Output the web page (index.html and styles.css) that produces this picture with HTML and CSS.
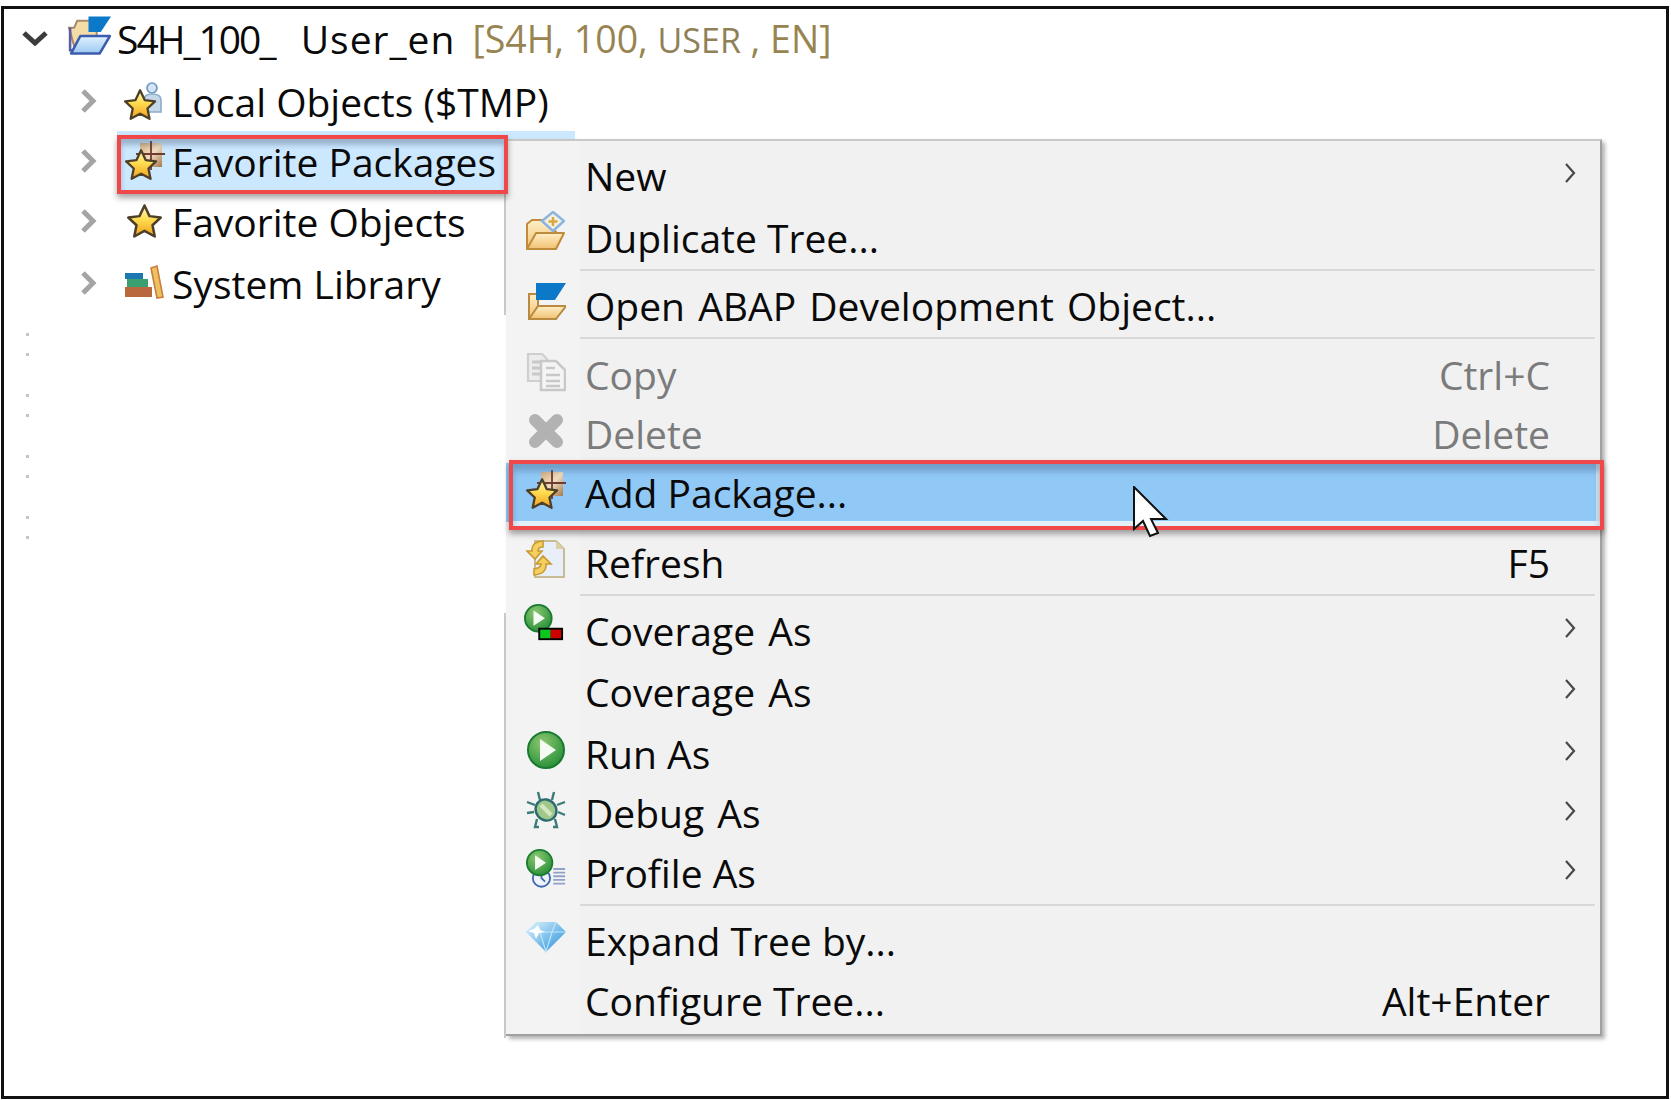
FILE: index.html
```html
<!DOCTYPE html>
<html lang="en">
<head>
    <meta charset="UTF-8">
    <title>Project Explorer - context menu</title>
    <link rel="stylesheet" href="styles.css">
</head>
<body>
    <svg class="defs" width="0" height="0">
        <defs>
            <linearGradient id="gold" x1="0" y1="0" x2="0" y2="1">
                <stop offset="0" stop-color="#fff6c0"/>
                <stop offset="0.45" stop-color="#ffdc50"/>
                <stop offset="1" stop-color="#f0a020"/>
            </linearGradient>
            <linearGradient id="tan" x1="0" y1="0" x2="1" y2="1">
                <stop offset="0" stop-color="#d8b080"/>
                <stop offset="0.5" stop-color="#f0dcc0"/>
                <stop offset="1" stop-color="#a87848"/>
            </linearGradient>
            <linearGradient id="folder" x1="0" y1="0" x2="0" y2="1">
                <stop offset="0" stop-color="#fff0c8"/>
                <stop offset="1" stop-color="#f0c070"/>
            </linearGradient>
            <linearGradient id="glass" x1="0" y1="0" x2="0" y2="1">
                <stop offset="0" stop-color="#e2f2ff"/>
                <stop offset="1" stop-color="#9cc8f0"/>
            </linearGradient>
            <radialGradient id="green" cx="0.4" cy="0.3" r="0.8">
                <stop offset="0" stop-color="#8cc870"/>
                <stop offset="1" stop-color="#1e8a34"/>
            </radialGradient>
            <linearGradient id="gem" x1="0" y1="0" x2="1" y2="1">
                <stop offset="0" stop-color="#e4f6ff"/>
                <stop offset="1" stop-color="#1c8cd8"/>
            </linearGradient>
            <path id="star" d="M14 2 L18 10.500 L27 11.600 L20.400 17.800 L22.200 26.800 L14 22.300 L5.800 26.800 L7.600 17.800 L1 11.600 L10 10.500 Z" fill="url(#gold)" stroke="#4e4028" stroke-width="2" stroke-linejoin="round"/>
            <g id="pkgstar">
                <rect x="15" y="2" width="22" height="24" fill="url(#tan)"/>
                <path d="M26 -2V29M11 13H40" stroke="#6e3c30" stroke-width="1.800" fill="none"/>
                <use href="#star" transform="translate(0 7) scale(1.150)"/>
            </g>
            <g id="playdisc">
                <circle cx="15" cy="15" r="14" fill="url(#green)" stroke="#1a7a30" stroke-width="2"/>
                <path d="M10 7 L22 15 L10 23 Z" fill="#f4fbf2"/>
            </g>
        </defs>
    </svg>

    <div class="frame">
        <ul class="tree">
            <li class="node root">
                <svg class="twisty-open" viewBox="0 0 28 16"><path d="M3 3 L14 13 L25 3" fill="none" stroke="#3c3c3c" stroke-width="5"/></svg>
                <svg class="icon-root" viewBox="0 0 44 38">
                    <path d="M3 12 H8 L11 5 H24 L26 12 H30 V30 H8 Z" fill="#f4dca8" stroke="#a58a70" stroke-width="2"/>
                    <path d="M4 12 V34 H10" fill="none" stroke="#5a5ca0" stroke-width="2.500"/>
                    <path d="M22 1 H44 L34 16 H22 Z" fill="#0c78c8"/>
                    <path d="M14 20 H43 L33 37 H5 Z" fill="url(#glass)" stroke="#3c5cae" stroke-width="2.500" stroke-linejoin="round"/>
                </svg>
                <span class="name"><span class="host">S4H_100_</span> <span class="user">User_en</span></span>
                <span class="decor">[S4H, 100, <span class="decor-small">USER</span> , EN]</span>
            </li>
            <li class="node">
                <svg class="twisty" viewBox="0 0 18 26"><path d="M3 3 L13 13 L3 23" fill="none" stroke="#a4a4a4" stroke-width="5"/></svg>
                <svg class="icon" viewBox="0 0 40 40">
                    <circle cx="28" cy="7" r="5" fill="#d4e4f4" stroke="#6a92c0" stroke-width="1.600"/>
                    <path d="M20 28 V19 Q20 13 28 13 Q37 13 37 19 V31 H22 Z" fill="#c4d8ea" stroke="#8cacc8" stroke-width="1.600"/>
                    <use href="#star" transform="translate(0 7) scale(1.150)"/>
                </svg>
                <span class="name">Local Objects ($TMP)</span>
            </li>
            <li class="node selected">
                <svg class="twisty" viewBox="0 0 18 26"><path d="M3 3 L13 13 L3 23" fill="none" stroke="#a4a4a4" stroke-width="5"/></svg>
                <svg class="icon" viewBox="0 0 40 40"><use href="#pkgstar"/></svg>
                <span class="name">Favorite Packages</span>
            </li>
            <li class="node">
                <svg class="twisty" viewBox="0 0 18 26"><path d="M3 3 L13 13 L3 23" fill="none" stroke="#a4a4a4" stroke-width="5"/></svg>
                <svg class="icon" viewBox="0 0 40 40"><use href="#star" transform="translate(3 2) scale(1.250)"/></svg>
                <span class="name">Favorite Objects</span>
            </li>
            <li class="node node-last">
                <svg class="twisty" viewBox="0 0 18 26"><path d="M3 3 L13 13 L3 23" fill="none" stroke="#a4a4a4" stroke-width="5"/></svg>
                <svg class="icon" viewBox="0 0 40 40">
                    <path d="M27 4 L33 2 L39 33 L33 34 Z" fill="#eec060" stroke="#c8803c" stroke-width="1.600"/>
                    <rect x="1" y="9" width="18" height="6" fill="#1c78b0"/>
                    <rect x="3" y="15" width="21" height="8" fill="#3aa070"/>
                    <rect x="1" y="23" width="27" height="10" fill="#b8683c"/>
                </svg>
                <span class="name">System Library</span>
            </li>
        </ul>

        <div class="guides">
            <i></i><i></i><i></i><i></i><i></i><i></i><i></i><i></i>
        </div>
    </div>

    <div class="menu">
        <div class="item">
            <span class="slot"></span><span class="label">New</span><span class="key"></span>
            <svg class="more" viewBox="0 0 12 22"><path d="M2 2 L10 11 L2 20" fill="none" stroke="#484848" stroke-width="2.200"/></svg>
        </div>
        <div class="item loose-2">
            <span class="slot"><svg class="icon icon-lifted" viewBox="0 0 40 40">
                <path d="M2 38 V13 L7 9 H18 L32 22 V24 H12 L5 38 Z" fill="url(#folder)" stroke="#c08c3c" stroke-width="2"/>
                <path d="M11 22 H39 L31 38 H2 Z" fill="url(#folder)" stroke="#c08c3c" stroke-width="2" stroke-linejoin="round"/>
                <path d="M28 1 L39 10 L28 20 L17 10 Z" fill="#f4f0e0" stroke="#8cb4e0" stroke-width="2.500"/>
                <path d="M28 6 V15 M23.500 10.500 H32.500" stroke="#d8a840" stroke-width="2.500"/>
            </svg></span>
            <span class="label">Duplicate Tree...</span><span class="key"></span>
        </div>
        <div class="sep"></div>
        <div class="item">
            <span class="slot"><svg class="icon" viewBox="0 0 40 40">
                <path d="M3 37 V12 H12 V24 H34 V27 L30 37 Z" fill="url(#folder)" stroke="#b98a40" stroke-width="2"/>
                <path d="M10 1 H40 L29 18 H10 Z" fill="#0c78c8"/>
                <path d="M12 24 H40 L30 37 H3 Z" fill="url(#folder)" stroke="#b98a40" stroke-width="2" stroke-linejoin="round"/>
            </svg></span>
            <span class="label wide">Open ABAP Development Object...</span><span class="key"></span>
        </div>
        <div class="sep"></div>
        <div class="item compact off loose-2">
            <span class="slot"><svg class="icon" viewBox="0 0 40 40">
                <path d="M2 2 H16 L21 7 V29 H2 Z" fill="#ececec" stroke="#cfcfcf" stroke-width="2.200"/>
                <path d="M6 10 H16 M6 16 H14 M6 22 H14" stroke="#c8c8c8" stroke-width="3"/>
                <path d="M15 9 H30 L39 18 V38 H15 Z" fill="#f4f4f4" stroke="#c8c8c8" stroke-width="2.500"/>
                <path d="M20 16 H29 M20 23 H34 M20 29 H34 M20 34 H34" stroke="#c8c8c8" stroke-width="2.400"/>
            </svg></span>
            <span class="label">Copy</span><span class="key">Ctrl+C</span>
        </div>
        <div class="item compact off">
            <span class="slot"><svg class="icon" viewBox="0 0 40 40">
                <path d="M9 9 L31 31 M31 9 L9 31" fill="none" stroke="#b2b2b2" stroke-width="12" stroke-linecap="round"/>
            </svg></span>
            <span class="label">Delete</span><span class="key">Delete</span>
        </div>
        <div class="item compact hot">
            <span class="slot"><svg class="icon" viewBox="0 0 40 40"><use href="#pkgstar"/></svg></span>
            <span class="label">Add Package...</span><span class="key"></span>
        </div>
        <div class="item gap-above">
            <span class="slot"><svg class="icon" viewBox="0 0 40 40">
                <path d="M9 2 H30 L38 10 V38 H9 Z" fill="#e8eff8" stroke="#c8bc96" stroke-width="2"/>
                <path d="M30 2 V10 H38 Z" fill="#dccfa4"/>
                <path d="M17 2 Q5 3 6 12 L1 12 L9 20 L16 12 L12 12 Q12 8 17 8 Z M8 36 Q21 35 20 25 L25 25 L17 17 L10 25 L15 25 Q15 29 8 30 Z" fill="#f4d060" stroke="#c89a30" stroke-width="1.600"/>
            </svg></span>
            <span class="label">Refresh</span><span class="key">F5</span>
        </div>
        <div class="sep"></div>
        <div class="item">
            <span class="slot"><svg class="icon icon-raised" viewBox="0 0 42 40">
                <use href="#playdisc"/>
                <rect x="15" y="25" width="26" height="13" fill="#000"/>
                <rect x="17" y="27" width="11" height="9" fill="#0ac81e"/>
                <rect x="28" y="27" width="11" height="9" fill="#d00000"/>
            </svg></span>
            <span class="label wide">Coverage As</span><span class="key"></span>
            <svg class="more" viewBox="0 0 12 22"><path d="M2 2 L10 11 L2 20" fill="none" stroke="#484848" stroke-width="2.200"/></svg>
        </div>
        <div class="item loose">
            <span class="slot"></span><span class="label wide">Coverage As</span><span class="key"></span>
            <svg class="more" viewBox="0 0 12 22"><path d="M2 2 L10 11 L2 20" fill="none" stroke="#484848" stroke-width="2.200"/></svg>
        </div>
        <div class="item loose-2">
            <span class="slot"><svg class="icon" viewBox="0 0 40 40">
                <circle cx="20" cy="20" r="18" fill="url(#green)" stroke="#1a7a30" stroke-width="2"/>
                <path d="M14 9 L30 20 L14 31 Z" fill="#f4fbf2"/>
            </svg></span>
            <span class="label">Run As</span><span class="key"></span>
            <svg class="more" viewBox="0 0 12 22"><path d="M2 2 L10 11 L2 20" fill="none" stroke="#484848" stroke-width="2.200"/></svg>
        </div>
        <div class="item compact">
            <span class="slot"><svg class="icon" viewBox="0 0 40 40">
                <path d="M14 10 L12 2 M26 10 L28 2 M9 15 L1 12 M31 15 L39 12 M8 22 L1 23 M32 22 L39 25 M11 29 L9 37 H13 M29 29 L31 37 H27" fill="none" stroke="#3c7c78" stroke-width="2.400"/>
                <ellipse cx="20" cy="20" rx="10" ry="11" transform="rotate(-40 20 20)" fill="#a0c88c" stroke="#2c6c70" stroke-width="2.400"/>
                <path d="M15 15 L25 25" stroke="#d4e8c0" stroke-width="4"/>
            </svg></span>
            <span class="label wide">Debug As</span><span class="key"></span>
            <svg class="more" viewBox="0 0 12 22"><path d="M2 2 L10 11 L2 20" fill="none" stroke="#484848" stroke-width="2.200"/></svg>
        </div>
        <div class="item">
            <span class="slot"><svg class="icon" viewBox="0 0 44 44">
                <circle cx="17" cy="32" r="9.500" fill="#f0f4fa" stroke="#3c68b4" stroke-width="2"/>
                <path d="M17 26 V32 L21 36" fill="none" stroke="#3c68b4" stroke-width="2"/>
                <path d="M30 22 H43 M30 26 H43 M30 30 H43 M30 34 H43 M30 38 H43" stroke="#8ea2c8" stroke-width="2"/>
                <use href="#playdisc"/>
            </svg></span>
            <span class="label">Profile As</span><span class="key"></span>
            <svg class="more" viewBox="0 0 12 22"><path d="M2 2 L10 11 L2 20" fill="none" stroke="#484848" stroke-width="2.200"/></svg>
        </div>
        <div class="sep"></div>
        <div class="item">
            <span class="slot"><svg class="icon" viewBox="0 0 40 40">
                <path d="M10 5 H30 L40 15 L20 35 L0 15 Z" fill="url(#gem)"/>
                <path d="M10 5 L14 15 L20 35 L26 15 L30 5 M0 15 H40" fill="none" stroke="#bde6fa" stroke-width="1.200"/>
                <path d="M8 12 L12 8 L14 13 L19 15 L13 16 L10 22 L8 16 L2 14 Z" fill="#fff"/>
            </svg></span>
            <span class="label">Expand Tree by...</span><span class="key"></span>
        </div>
        <div class="item">
            <span class="slot"></span><span class="label">Configure Tree...</span><span class="key">Alt+Enter</span>
        </div>
    </div>

    <div class="callout callout-node"></div>
    <div class="callout callout-item"></div>

    <svg class="pointer" viewBox="0 0 36 54">
        <path d="M1 1 V43 L10 35 L17 50 L25 47 L18 33 L33 33 Z" fill="#fff" stroke="#111" stroke-width="2" stroke-linejoin="miter"/>
    </svg>
</body>
</html>
```

FILE: styles.css
```css
html, body {
    margin: 0;
    height: 1100px;
    background-color: white;
}
body {
    font-family: "Open Sans", "Noto Sans", sans-serif;
    font-size: 39px;
    color: #0a0a0a;
    position: relative;
    overflow: hidden;
}
.defs {
    position: absolute;
}
.frame {
    box-sizing: border-box;
    width: 1668px;
    height: 1093px;
    margin-left: 1px;
    position: relative;
    top: 6px;
    border: 3px solid #111;
}

/* tree */
.tree {
    list-style: none;
    margin: 0;
    padding: 0;
}
.node {
    display: flex;
    align-items: center;
    height: 60px;
    padding-left: 76px;
    width: 496px;
}
.node svg {
    flex: none;
}
.node.selected {
    width: 458px;
    margin-left: 113px;
    padding-left: 0;
    background-color: #cce8ff;
}
.node.selected .twisty {
    margin-left: -37px;
    margin-right: 22px;
}
.node.selected .icon {
    margin-left: 5px;
}
.node.selected .name {
    margin-left: -1px;
}
.node-last {
    margin-top: 2px;
}
.node-last .icon {
    margin-top: 2px;
}
.root {
    height: 60px;
    margin-top: -1px;
    margin-bottom: 3px;
    padding-left: 17px;
    width: auto;
}
.twisty-open {
    width: 28px;
    height: 16px;
    margin-right: 17px;
}
.twisty {
    width: 18px;
    height: 26px;
    margin-right: 26px;
}
.icon-root {
    width: 45px;
    height: 40px;
    margin-right: 6px;
    margin-top: -6px;
}
.icon {
    width: 40px;
    height: 40px;
    flex: none;
}
.node .icon {
    margin-right: 8px;
}
.root .name {
    word-spacing: 16px;
}
.host {
    letter-spacing: -2px;
}
.user {
    letter-spacing: 1px;
}
.decor {
    margin-left: 17px;
    font-size: 37.5px;
    color: #988450;
}
.decor-small {
    font-size: 34px;
    color: #8f8058;
}
.guides {
    margin: 20px 0 0 22px;
    width: 3px;
}
.guides i {
    display: block;
    width: 3px;
    height: 3px;
    margin-bottom: 17px;
    background-color: #c4c4c4;
}
.guides i:nth-child(even) {
    margin-bottom: 38px;
}

/* context menu */
.menu {
    position: absolute;
    left: 506px;
    top: 139px;
    width: 1096px;
    height: 897px;
    box-sizing: border-box;
    display: flex;
    flex-direction: column;
    padding-top: 4px;
    background: linear-gradient(to right, #f3f3f3 74px, #f1f1f1 74px);
    border-top: 2px solid #c8c8c8;
    border-right: 2px solid #a0a0a0;
    border-bottom: 2px solid #a0a0a0;
    box-shadow: 3px 3px 4px rgba(0, 0, 0, 0.3);
}
.menu::before,
.menu::after {
    content: "";
    position: absolute;
    left: -2px;
    width: 2px;
    background-color: #c8c8c8;
}
.menu::before {
    top: 51px;
    height: 123px;
}
.menu::after {
    top: 472px;
    height: 425px;
}
.item {
    display: flex;
    flex: none;
    align-items: center;
    height: 60px;
}
.item.compact {
    height: 59px;
}
.item.loose {
    margin-top: 1px;
}
.item.loose-2 {
    margin-top: 2px;
}
.item.gap-above {
    margin-top: 10px;
}
.item.hot {
    background-color: #90c8f6;
}
.off {
    color: #7b7b7b;
}
.slot {
    flex: none;
    display: flex;
    align-items: center;
    width: 61px;
    height: 100%;
    padding-left: 20px;
    box-sizing: border-box;
    margin-right: 18px;
}
.slot .icon {
    margin-top: -6px;
}
.slot .icon-lifted {
    margin-top: -12px;
    margin-left: -1px;
}
.slot .icon-raised {
    margin-top: -14px;
    margin-left: -2px;
}
.label {
    flex: 1;
}
.label.wide {
    word-spacing: 3px;
}
.key {
    margin-right: 50px;
}
.more {
    width: 12px;
    height: 22px;
    position: absolute;
    right: 24px;
    margin-top: -4px;
}
.sep {
    flex: none;
    height: 2px;
    margin: 2px 5px 4px 74px;
    background-color: #d8d8d8;
}

/* red annotation boxes, drawn on top of the screenshot */
.callout {
    position: absolute;
    box-sizing: border-box;
    border: 4px solid #f04848;
}
.callout-node {
    left: 117px;
    top: 135px;
    width: 391px;
    height: 59px;
    box-shadow: 0 4px 6px rgba(0, 0, 0, 0.35), inset 0 6px 5px rgba(40, 60, 90, 0.3);
}
.callout-item {
    left: 509px;
    top: 460px;
    width: 1095px;
    height: 70px;
    box-shadow: 0 4px 6px rgba(0, 0, 0, 0.35), inset 0 7px 6px rgba(40, 60, 90, 0.3), inset 0 -5px 0 #e2eef8, inset -4px 0 0 #d4dfe8;
}
.pointer {
    position: absolute;
    left: 1133px;
    top: 486px;
    width: 36px;
    height: 54px;
}
```
